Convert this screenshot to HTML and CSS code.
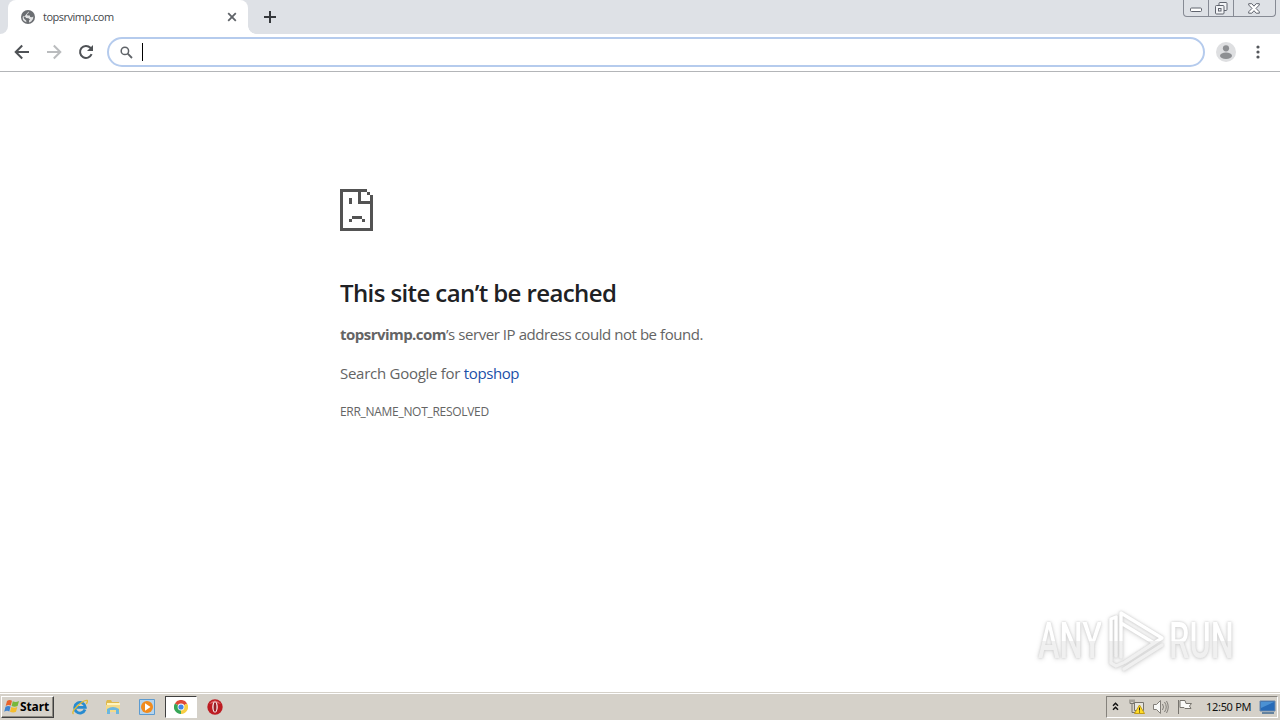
FILE: index.html
```
<!DOCTYPE html>
<html lang="en">

<head>
    <meta charset="UTF-8">
    <title>topsrvimp.com</title>
    <link rel="stylesheet" href="styles.css">
</head>

<body>
<!-- tab strip -->
<header class="tabs">
    <div class="tab-prev"></div>
    <div class="tab">
        <svg class="globe" width="14" height="14" viewBox="0 0 14 14">
            <circle cx="7" cy="7" r="7" fill="#6b6e72"/>
            <path d="M7.6 1.6Q8.4 2.4 7.2 3.2L6 4.2 6.4 5.4 8.8 5.6 9.2 7 11 7.2 12.4 6.4Q12.6 9.6 10.2 11.4L8 12.4V10.6L9 9.4 7.6 8.2 5 8 4.4 6.8 2 6.2 1.6 7.4Q1.4 9.6 3.4 11.2L5.4 12.2 5.2 10.4 3.4 9 2.6 7.4Z" fill="#fff" opacity=".8"/>
        </svg>
        <span class="tab-title">topsrvimp.com</span>
        <svg class="tab-close" width="10" height="10" viewBox="0 0 10 10">
            <path d="M1.2 1.2 8.8 8.8M8.8 1.2 1.2 8.8" stroke="#5f6368" stroke-width="1.8"/>
        </svg>
    </div>
    <svg class="new-tab" width="12" height="12" viewBox="0 0 12 12">
        <path d="M6 0V12M0 6H12" stroke="#35383c" stroke-width="2"/>
    </svg>
    <div class="window-buttons">
        <span class="minimize">
            <svg width="13" height="6" viewBox="0 0 13 6"><rect x=".5" y="1" width="11" height="3.5" rx="1" fill="#fff" stroke="#60646e"/></svg>
        </span>
        <span class="restore">
            <svg width="13" height="13" viewBox="0 0 13 13" fill="#f2f3f6" stroke="#60646e">
                <rect x="4" y=".5" width="8" height="8" rx="1"/>
                <rect x=".5" y="3.5" width="8.5" height="8.5" rx="1"/>
                <rect x="3.5" y="6.5" width="2.5" height="2.5"/>
            </svg>
        </span>
        <span class="close">
            <svg width="12" height="11" viewBox="0 0 12 11"><path d="M.7.7H3.8L6 3.2 8.2.7H11.3V2L8 5.4 11.3 8.8V10.2H8.2L6 7.7 3.8 10.2H.7V8.8L4 5.4.7 2Z" fill="#fff" stroke="#60646e"/></svg>
        </span>
    </div>
</header>

<!-- toolbar -->
<nav class="toolbar">
    <svg class="back" width="16" height="16" viewBox="0 0 16 16">
        <path d="M15 8H2M8.2 1.5 1.7 8 8.2 14.5" fill="none" stroke="#4f5256" stroke-width="2"/>
    </svg>
    <svg class="forward" width="16" height="16" viewBox="0 0 16 16">
        <path d="M1 8H14M7.8 1.5 14.3 8 7.8 14.5" fill="none" stroke="#babcbe" stroke-width="2"/>
    </svg>
    <svg class="reload" width="16" height="16" viewBox="0 0 16 16">
        <path d="M13.6 10.2A6 6 0 1 1 12.4 3.8L14 5.4" fill="none" stroke="#4f5256" stroke-width="2"/>
        <path d="M15 1V7H9Z" fill="#4f5256"/>
    </svg>
    <div class="omnibox">
        <svg width="13" height="13" viewBox="0 0 13 13">
            <circle cx="4.9" cy="4.9" r="3.7" fill="none" stroke="#5f6368" stroke-width="1.5"/>
            <path d="M7.7 7.7 12 12" stroke="#5f6368" stroke-width="1.8"/>
        </svg>
        <i class="caret"></i>
    </div>
    <svg class="avatar" width="20" height="20" viewBox="0 0 20 20">
        <circle cx="10" cy="10" r="10" fill="#dedfe1"/>
        <circle cx="10" cy="6.3" r="3.1" fill="#8d8f92"/>
        <ellipse cx="10" cy="13.7" rx="6" ry="3.2" fill="#8d8f92"/>
    </svg>
    <svg class="menu" width="4" height="14" viewBox="0 0 4 14" fill="#54575b">
        <circle cx="2" cy="2" r="1.6"/>
        <circle cx="2" cy="7" r="1.6"/>
        <circle cx="2" cy="12" r="1.6"/>
    </svg>
</nav>

<!-- error page -->
<main class="page">
    <div class="error">
        <svg class="sad" width="33" height="42" viewBox="0 0 33 42" fill="#535353" shape-rendering="crispEdges">
            <path d="M0 0H27V3H21V12H33V42H0ZM3 3V39H30V15H18V3Z" fill-rule="evenodd"/>
            <path d="M27 3H30V6H27ZM30 6H33V12H30ZM9 9H12V15H9ZM9 30H12V33H9ZM12 27H22V30H12ZM22 30H25V33H22Z"/>
        </svg>
        <h1><span>This site can’t be reached</span></h1>
        <p class="summary"><strong>topsrvimp.com</strong><span>’s server IP address could not be found.</span></p>
        <p class="suggest"><span>Search Google for </span><a href="#">topshop</a></p>
        <div class="code"><span>ERR_NAME_NOT_RESOLVED</span></div>
    </div>
    <div class="watermark">
        <span class="any">ANY</span>
        <svg width="58" height="64" viewBox="0 0 58 64" fill="none" stroke-linejoin="round" stroke-linecap="round">
            <defs>
                <linearGradient id="fade" gradientUnits="userSpaceOnUse" x1="0" y1="0" x2="0" y2="64">
                    <stop offset=".5" stop-color="#fff"/>
                    <stop offset=".5" stop-color="#f0f0f0"/>
                </linearGradient>
            </defs>
            <g class="mark" stroke="url(#fade)" stroke-width="3.4">
                <path d="M13 48V4L54 29 17 53M13 14 46 34"/>
                <path d="M3 54V10L8 8V47M3 54 8 57 15 54M16 60 54 36"/>
            </g>
        </svg>
        <span class="run">RUN</span>
    </div>
</main>

<!-- taskbar -->
<footer class="taskbar">
    <div class="start">
        <svg width="16" height="15" viewBox="0 0 16 15">
            <path d="M3 2Q5.5.2 8 1.8L6.8 6.6Q4.3 5.4 1.7 6.9Z" fill="#e8632b"/>
            <path d="M8.8 2.2Q11.5 3.7 15 2L13.6 7Q10.5 8.3 7.6 7Z" fill="#78b83b"/>
            <path d="M1.5 7.8Q4 6.3 6.6 7.5L5.3 12.4Q2.8 11.2.2 12.7Z" fill="#3e83d0"/>
            <path d="M7.3 7.9Q10.2 9.3 13.3 8L12 12.8Q9 14.2 6 12.7Z" fill="#f5bd2d"/>
        </svg>
        <span>Start</span>
    </div>
    <div class="quick">
        <svg width="16" height="16" viewBox="0 0 16 16">
            <path d="M13 10.6A5.3 5.3 0 1 1 13.3 8.3H4" fill="none" stroke="#278bd0" stroke-width="2.8"/>
            <path d="M1.5 15Q-.8 13.2 5 7.5 12 .7 15 1.4 16 2 14.3 5" fill="none" stroke="#e0bb36" stroke-width="1.4"/>
        </svg>
        <svg width="16" height="16" viewBox="0 0 16 16">
            <path d="M1 3 2 1H6L7 3H14V13H1Z" fill="#dfb94d"/>
            <path d="M2 4H15V8H2Z" fill="#fff4bd"/>
            <path d="M1 6H15V13H1Z" fill="#f4da88"/>
            <path d="M2 15V10Q8 6 14 10V15H11V11H5V15Z" fill="#6bb7df"/>
        </svg>
        <svg width="16" height="16" viewBox="0 0 16 16">
            <path d="M.5.5H15.5V15.5H.5Z" fill="#b5d4ed" stroke="#5c9bd0"/>
            <circle cx="8" cy="8" r="6" fill="#f18b1d"/>
            <path d="M6 4.3 11.5 8 6 11.7Z" fill="#fff"/>
        </svg>
        <div class="active">
            <svg width="14" height="14" viewBox="0 0 14 14">
                <path d="M7 7 .9 3.5A7 7 0 0 1 13.1 3.5Z" fill="#df4937"/>
                <path d="M7 7V14A7 7 0 0 1 .9 3.5Z" fill="#37a657"/>
                <path d="M7 7 13.1 3.5A7 7 0 0 1 7 14Z" fill="#f8ce43"/>
                <circle cx="7" cy="7" r="3.4" fill="#fff"/>
                <circle cx="7" cy="7" r="2.6" fill="#4285e8"/>
            </svg>
        </div>
        <svg width="16" height="16" viewBox="0 0 16 16">
            <circle cx="8" cy="8" r="7.7" fill="#bd1c22"/>
            <path d="M2 5Q8-2 14 5 8 3 2 5Z" fill="#dc6669"/>
            <ellipse cx="8" cy="8" rx="2.7" ry="5.6" fill="#fff"/>
            <ellipse cx="8" cy="8" rx="1.5" ry="4.8" fill="#972027"/>
        </svg>
    </div>
    <div class="tray">
        <svg class="chevrons" width="7" height="9" viewBox="0 0 7 9">
            <path d="M1 3.7 3.5 1.2 6 3.7M1 7.7 3.5 5.2 6 7.7" fill="none" stroke="#111" stroke-width="1.5"/>
        </svg>
        <svg class="network" width="16" height="16" viewBox="0 0 16 16">
            <path d="M5.5 3.5H14.5V11.5H5.5ZM7 13.5H13" fill="#e6e5df" stroke="#77746e"/>
            <path d="M1 .5V4.5H5V.5M3 .5V3M3 4.5V13.5H7" fill="none" stroke="#77746e"/>
            <path d="M10.5 6 15.5 14.5H5.5Z" fill="#ffdc27" stroke="#c39d16"/>
            <path d="M10.5 8.5V11.5M10.5 12.5V13.5" stroke="#222"/>
        </svg>
        <svg class="volume" width="16" height="16" viewBox="0 0 16 16" fill="none" stroke="#817e78">
            <path d="M.5 5.5H3.5L7.5 1.5V14.5L3.5 10.5H.5Z" fill="#f8f8f6"/>
            <path d="M9.5 5Q11.5 8 9.5 11M11.5 3Q15 8 11.5 13M13.5 2Q17 8 13.5 14"/>
        </svg>
        <svg class="flag" width="16" height="16" viewBox="0 0 16 16">
            <path d="M1.5 1V15M3 1.5H8L9 4.5H14.5L12.5 7 14 9.5H8L7 8.5H3Z" fill="#fafaf8" stroke="#77746e"/>
        </svg>
        <span class="clock">12:50 PM</span>
        <svg class="desktop" width="17" height="14" viewBox="0 0 17 14">
            <path d="M1 1H16V11H1Z" fill="#276bb8" stroke="#6887aa"/>
            <path d="M2 2H15L2 8Z" fill="#4b91d3"/>
            <path d="M3 13H15" stroke="#65839f" stroke-width="2"/>
        </svg>
    </div>
</footer>
</body>

</html>
```
FILE: styles.css
```
* {
    padding: 0;
    margin: 0;
    box-sizing: border-box;
}

body {
    display: flex;
    flex-direction: column;
    width: 1280px;
    height: 720px;
    overflow: hidden;
    background: #fff;
    font-family: "Open Sans", "Noto Sans", sans-serif;
}

svg {
    display: block;
    flex: none;
}

span, strong, a {
    white-space: pre;
}

/* tab strip */
.tabs {
    display: flex;
    height: 34px;
    background: #dee1e6;
}

.tab-prev {
    width: 8px;
    background: #fff;
}

.tab-prev::before {
    content: "";
    display: block;
    height: 34px;
    background: #dee1e6;
    border-bottom-right-radius: 8px;
}

.tab {
    position: relative;
    display: flex;
    align-items: center;
    width: 240px;
    padding: 0 11px 0 13px;
    background: #fff;
    border-radius: 8px 8px 0 0;
}

/* curved foot of the tab */
.tab::after {
    content: "";
    position: absolute;
    left: 240px;
    bottom: 0;
    width: 8px;
    height: 8px;
    background: radial-gradient(circle at 100% 0, #dee1e6 7.5px, #fff 8px);
}

.tab-title {
    margin-left: 8px;
    padding-bottom: 2px;
    font-size: 11px;
    letter-spacing: -.5px;
    color: #45484c;
}

.tab-close {
    margin-left: auto;
}

.new-tab {
    margin: 11px 0 0 16px;
}

.window-buttons {
    display: flex;
    width: 93px;
    height: 17px;
    margin-left: auto;
    margin-right: 4px;
    border: 1px solid #868a94;
    border-top: 0;
    border-radius: 0 0 4px 4px;
}

.window-buttons span {
    display: flex;
    align-items: center;
    justify-content: center;
    width: 25px;
    border-right: 1px solid #868a94;
}

.window-buttons .minimize {
    padding-top: 4px;
}

.window-buttons .close {
    flex: 1;
    padding-right: 2px;
    border: 0;
}

/* toolbar */
.toolbar {
    display: flex;
    align-items: center;
    height: 38px;
    padding: 0 20px 1px 14px;
    border-bottom: 1px solid #b3b5b8;
}

.forward, .reload {
    margin-left: 16px;
}

.omnibox {
    display: flex;
    align-items: center;
    width: 1098px;
    height: 30px;
    margin-left: 13px;
    padding-left: 11px;
    border: 2px solid #b5cbed;
    border-radius: 15px;
}

.caret {
    width: 1px;
    height: 18px;
    margin-left: 9px;
    background: #000;
}

.avatar {
    margin-left: 11px;
}

.menu {
    margin-left: auto;
}

/* error page */
.page {
    position: relative;
    flex: 1;
}

.error {
    padding: 117px 0 0 340px;
    color: #646464;
}

h1 {
    margin-top: 46px;
    font-size: 24px;
    font-weight: 600;
    line-height: 32px;
    letter-spacing: -.6px;
    color: #202124;
}

.summary, .suggest {
    font-size: 15px;
    line-height: 24px;
}

.summary {
    margin-top: 13px;
}

.summary strong {
    letter-spacing: -.53px;
}

.summary span {
    letter-spacing: -.44px;
}

.suggest {
    margin-top: 15px;
    letter-spacing: -.27px;
}

.suggest a {
    color: #1b50a8;
    text-decoration: none;
    letter-spacing: -.4px;
}

.code {
    margin-top: 18px;
    font-size: 12px;
    line-height: 18px;
    letter-spacing: -.3px;
}

.watermark {
    position: absolute;
    top: 537px;
    left: 1038px;
    display: flex;
    align-items: center;
    height: 64px;
    font-family: Roboto, sans-serif;
    font-size: 50px;
    font-weight: 500;
    line-height: 66px;
    filter: drop-shadow(0 0 1px #ccc) drop-shadow(0 1px 2px #ddd);
}

/* the lower half of the logo is a shade darker */
.watermark span {
    width: 63px;
    transform: scaleX(.65);
    transform-origin: 0 0;
    color: transparent;
    background: linear-gradient(#fff 50%, #f0f0f0 50%);
    background-clip: text;
    -webkit-background-clip: text;
}

.watermark .any, .watermark .run {
    width: 97px;
    margin-right: -34px;
}

.watermark svg {
    margin-left: 7px;
    margin-right: 3px;
}

/* taskbar */
.taskbar {
    display: flex;
    align-items: center;
    height: 28px;
    padding: 1px 2px 1px 1px;
    background: #d5d1c9;
    border-top: 1px solid #d5d1c9;
    box-shadow: inset 0 1px #fff;
}

.start {
    display: flex;
    align-items: center;
    width: 53px;
    height: 22px;
    padding-left: 2px;
    border: 1px solid;
    border-color: #fff #404040 #404040 #fff;
    box-shadow: inset -1px -1px #8c8981;
    color: #000;
}

.start span {
    font: bold 12px "Noto Sans", sans-serif;
    letter-spacing: -.1px;
}

.quick {
    display: flex;
    align-items: center;
    gap: 17px;
    margin-left: 18px;
}

.quick svg:nth-of-type(n+3) {
    margin-left: 1px;
}

.active {
    display: flex;
    align-items: center;
    justify-content: center;
    width: 32px;
    height: 22px;
    margin: 0 -8px 0 -7px;
    background: #fff;
    border: 1px solid;
    border-color: #404040 #fff #fff #404040;
}

.tray {
    display: flex;
    align-items: center;
    width: 172px;
    height: 22px;
    margin-left: auto;
    padding: 0 1px 0 5px;
    border: 1px solid;
    border-color: #85827c #fff #fff #85827c;
}

.network {
    margin-left: 10px;
}

.volume, .flag {
    margin-left: 8px;
}

.clock {
    margin-left: 13px;
    font: 11px "Noto Sans", sans-serif;
    letter-spacing: -.3px;
    color: #111;
}

.desktop {
    margin-left: auto;
}
```
